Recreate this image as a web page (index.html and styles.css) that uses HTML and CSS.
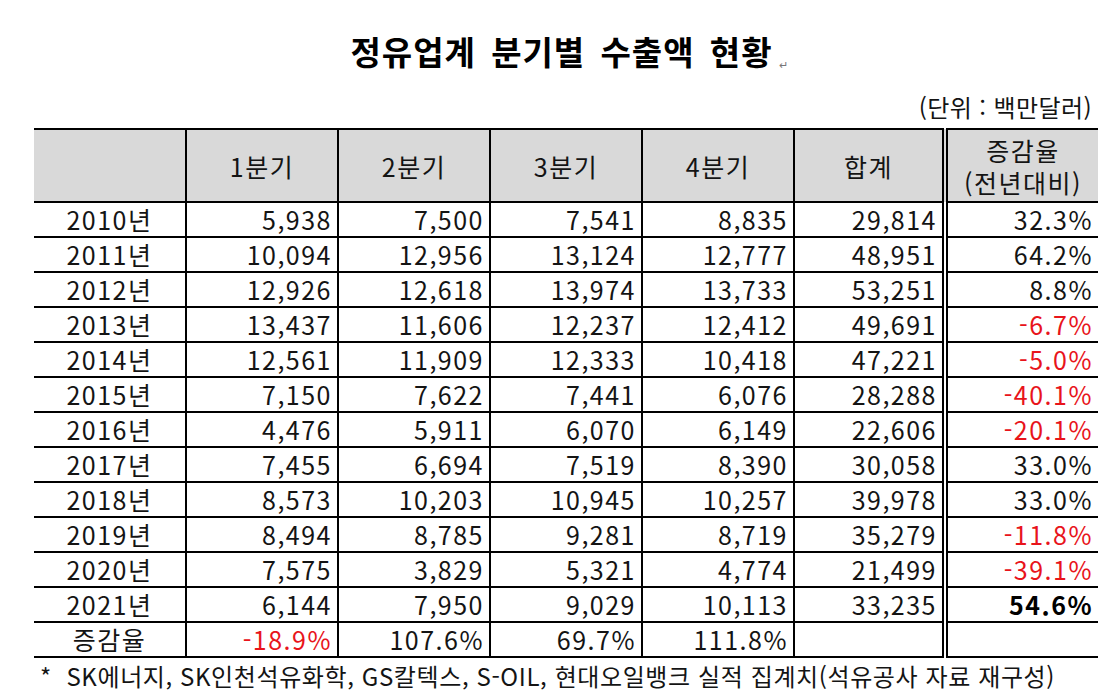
FILE: index.html
```html
<!DOCTYPE html>
<html lang="ko">
<head>
<meta charset="utf-8">
<link rel="stylesheet" href="styles.css">
</head>
<body>
<div class="page">
  <h1 class="title">정유업계 분기별 수출액 현황<span class="ret">↵</span></h1>
  <div class="unit">(단위 : 백만달러)</div>
  <table class="grid">
    <colgroup>
      <col class="c-year"><col class="c-q"><col class="c-q"><col class="c-q"><col class="c-q"><col class="c-sum"><col class="c-rate">
    </colgroup>
    <thead>
      <tr>
        <th></th><th>1분기</th><th>2분기</th><th>3분기</th><th>4분기</th><th>합계</th><th class="dbl"><span class="hl">증감율</span><span class="hl">(전년대비)</span></th>
      </tr>
    </thead>
    <tbody>
      <tr><td class="yr">2010년</td><td>5,938</td><td>7,500</td><td>7,541</td><td>8,835</td><td>29,814</td><td class="dbl">32.3%</td></tr>
      <tr><td class="yr">2011년</td><td>10,094</td><td>12,956</td><td>13,124</td><td>12,777</td><td>48,951</td><td class="dbl">64.2%</td></tr>
      <tr><td class="yr">2012년</td><td>12,926</td><td>12,618</td><td>13,974</td><td>13,733</td><td>53,251</td><td class="dbl">8.8%</td></tr>
      <tr><td class="yr">2013년</td><td>13,437</td><td>11,606</td><td>12,237</td><td>12,412</td><td>49,691</td><td class="dbl neg">-6.7%</td></tr>
      <tr><td class="yr">2014년</td><td>12,561</td><td>11,909</td><td>12,333</td><td>10,418</td><td>47,221</td><td class="dbl neg">-5.0%</td></tr>
      <tr><td class="yr">2015년</td><td>7,150</td><td>7,622</td><td>7,441</td><td>6,076</td><td>28,288</td><td class="dbl neg">-40.1%</td></tr>
      <tr><td class="yr">2016년</td><td>4,476</td><td>5,911</td><td>6,070</td><td>6,149</td><td>22,606</td><td class="dbl neg">-20.1%</td></tr>
      <tr><td class="yr">2017년</td><td>7,455</td><td>6,694</td><td>7,519</td><td>8,390</td><td>30,058</td><td class="dbl">33.0%</td></tr>
      <tr><td class="yr">2018년</td><td>8,573</td><td>10,203</td><td>10,945</td><td>10,257</td><td>39,978</td><td class="dbl">33.0%</td></tr>
      <tr><td class="yr">2019년</td><td>8,494</td><td>8,785</td><td>9,281</td><td>8,719</td><td>35,279</td><td class="dbl neg">-11.8%</td></tr>
      <tr><td class="yr">2020년</td><td>7,575</td><td>3,829</td><td>5,321</td><td>4,774</td><td>21,499</td><td class="dbl neg">-39.1%</td></tr>
      <tr><td class="yr">2021년</td><td>6,144</td><td>7,950</td><td>9,029</td><td>10,113</td><td>33,235</td><td class="dbl strong">54.6%</td></tr>
      <tr><td class="yr">증감율</td><td class="neg">-18.9%</td><td>107.6%</td><td>69.7%</td><td>111.8%</td><td></td><td class="dbl"></td></tr>
    </tbody>
  </table>
  <p class="note">*&nbsp; SK에너지, SK인천석유화학, GS칼텍스, S-OIL, 현대오일뱅크 실적 집계치(석유공사 자료 재구성)</p>
</div>
</body>
</html>
```
FILE: styles.css
```css
html, body {
  margin: 0;
  padding: 0;
  background: #ffffff;
}
body {
  font-family: "Noto Sans CJK KR", "Noto Sans", sans-serif;
  color: #141414;
}
.page {
  width: 1114px;
  height: 696px;
  overflow: hidden;
}
.title {
  margin: 0;
  padding-top: 30px;
  height: 60px;
  box-sizing: border-box;
  text-align: center;
  font-size: 33px;
  line-height: 42px;
  font-weight: 700;
  letter-spacing: 1px;
  word-spacing: 5px;
  color: #000;
  padding-left: 24px;
}
.ret {
  font-size: 11px;
  font-weight: 400;
  color: #777;
  letter-spacing: 0;
  word-spacing: 0;
  margin-left: 6px;
  vertical-align: -4px;
}
.unit {
  margin-top: 30px;
  text-align: right;
  padding-right: 22px;
  font-size: 24px;
  letter-spacing: 0.4px;
  line-height: 34px;
  height: 38px;
}
.grid {
  margin-left: 34px;
  width: 1064px;
  table-layout: fixed;
  border-collapse: collapse;
  font-size: 25px;
  letter-spacing: 1.5px;
}
.c-year { width: 152px; }
.c-q { width: 152px; }
.c-sum { width: 151px; }
.c-rate { width: 153px; }
.grid th {
  background: #d9d9d9;
  font-weight: 400;
  height: 71px;
  padding: 0;
  line-height: 32px;
  text-align: center;
  border-top: 2px solid #000;
  border-bottom: 2px solid #000;
  border-left: 2px solid #000;
}
.hl {
  display: block;
  height: 32px;
}
.grid td {
  height: 33px;
  padding: 0 5px 0 0;
  line-height: 33px;
  text-align: right;
  border-bottom: 2px solid #000;
  border-left: 2px solid #000;
  white-space: nowrap;
}
.grid th:first-child,
.grid td:first-child {
  border-left: none;
}
.grid td.yr {
  text-align: center;
  padding: 0;
}
.grid .dbl {
  border-left: 6px double #000;
}
.neg {
  color: #e8141b;
}
.strong {
  font-weight: 700;
  color: #000;
}
.note {
  margin: 0;
  padding-left: 40px;
  font-size: 24px;
  letter-spacing: 0.6px;
  line-height: 36px;
}
```
